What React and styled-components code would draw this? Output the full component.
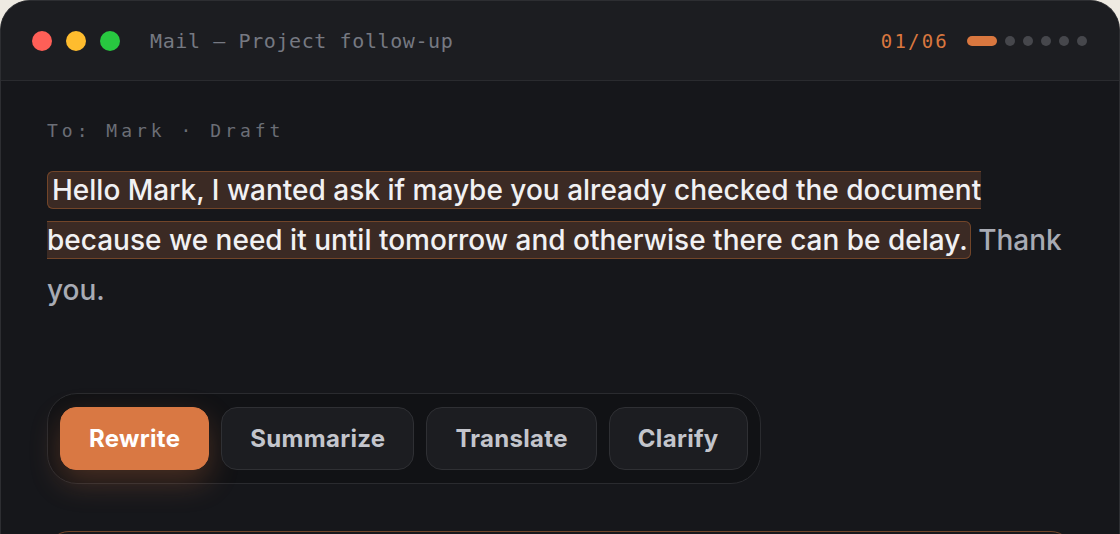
import React from "react";
import styled, { createGlobalStyle } from "styled-components";

const GlobalStyle = createGlobalStyle`
  html, body {
    margin: 0;
    padding: 0;
    background: #eeeae2;
    overflow: hidden;
  }
  body {
    font-family: Inter, "Noto Sans", sans-serif;
    -webkit-font-smoothing: antialiased;
  }
`;

const Window = styled.div`
  width: 1120px;
  height: 640px;
  box-sizing: border-box;
  background: #16171b;
  border: 1px solid #2d2e32;
  border-bottom: none;
  border-radius: 30px 30px 0 0;
  overflow: hidden;
`;

const TitleBar = styled.header`
  height: 79px;
  display: flex;
  align-items: center;
  padding: 0 31px;
  background: #1c1d21;
  border-bottom: 1px solid #2a2b2f;
`;

const Lights = styled.div`
  display: flex;
  gap: 14px;
  margin-right: 30px;
`;

const Light = styled.span`
  width: 20px;
  height: 20px;
  border-radius: 50%;
  background: ${(p) => p.$color};
`;

const Title = styled.div`
  font-family: "DejaVu Sans Mono", "Liberation Mono", monospace;
  font-size: 20px;
  letter-spacing: 0.6px;
  color: #767982;
  flex: 1;
`;

const Counter = styled.div`
  font-family: "DejaVu Sans Mono", "Liberation Mono", monospace;
  font-size: 19px;
  letter-spacing: 2.2px;
  color: #d9773f;
  margin-right: 18px;
`;

const Steps = styled.div`
  display: flex;
  align-items: center;
  gap: 8px;
  margin-right: 1px;
`;

const Step = styled.span`
  height: 10px;
  width: ${(p) => (p.$active ? "30px" : "10px")};
  border-radius: 5px;
  background: ${(p) => (p.$active ? "#d9773f" : "#46474c")};
`;

const Content = styled.main`
  padding: 38px 46px 0;
`;

const Meta = styled.div`
  font-family: "DejaVu Sans Mono", "Liberation Mono", monospace;
  font-size: 18px;
  line-height: 24px;
  letter-spacing: 4px;
  color: #6b6e76;
`;

const Body = styled.p`
  margin: 22px 0 0;
  font-size: 28px;
  font-weight: 500;
  line-height: 50px;
  letter-spacing: 0;
  color: #a8abb4;
`;

const Mark = styled.span`
  color: #f1f1f3;
  background: #3b2a24;
  border: 1px solid #724529;
  border-radius: 6px;
  padding: 1px 2px 1px 4px;
`;

const Toolbar = styled.div`
  margin-top: 78px;
  display: inline-flex;
  gap: 12px;
  padding: 13px 12px;
  background: #111215;
  border: 1px solid #2a2b2f;
  border-radius: 30px;
`;

const Action = styled.button`
  height: 63px;
  padding: 0 28px;
  border-radius: 16px;
  font-family: Inter, "Noto Sans", sans-serif;
  font-size: 24px;
  font-weight: 700;
  letter-spacing: 0.3px;
  cursor: pointer;
  border: 1px solid ${(p) => (p.$primary ? "#d97843" : "#2f3034")};
  background: ${(p) => (p.$primary ? "#d97843" : "#1c1d21")};
  color: ${(p) => (p.$primary ? "#ffffff" : "#c3c5cc")};
  box-shadow: ${(p) =>
    p.$primary ? "0 12px 30px rgba(217, 120, 67, 0.28)" : "none"};
`;

const Card = styled.section`
  margin-top: 47px;
  height: 120px;
  border: 1px solid #724529;
  border-radius: 22px;
  background: #17181c;
`;

const steps = [true, false, false, false, false, false];
const actions = ["Rewrite", "Summarize", "Translate", "Clarify"];

export default function App() {
  return (
    <>
      <GlobalStyle />
      <Window>
        <TitleBar>
          <Lights>
            <Light $color="#fe5f57" />
            <Light $color="#febc2e" />
            <Light $color="#28c840" />
          </Lights>
          <Title>Mail — Project follow-up</Title>
          <Counter>01/06</Counter>
          <Steps>
            {steps.map((a, i) => (
              <Step key={i} $active={a} />
            ))}
          </Steps>
        </TitleBar>
        <Content>
          <Meta>To: Mark · Draft</Meta>
          <Body>
            <Mark>
              Hello Mark, I wanted ask if maybe you already checked the document
              because we need it until tomorrow and otherwise there can be delay.
            </Mark>{" "}
            Thank you.
          </Body>
          <Toolbar>
            {actions.map((a, i) => (
              <Action key={a} $primary={i === 0}>
                {a}
              </Action>
            ))}
          </Toolbar>
          <Card />
        </Content>
      </Window>
    </>
  );
}
